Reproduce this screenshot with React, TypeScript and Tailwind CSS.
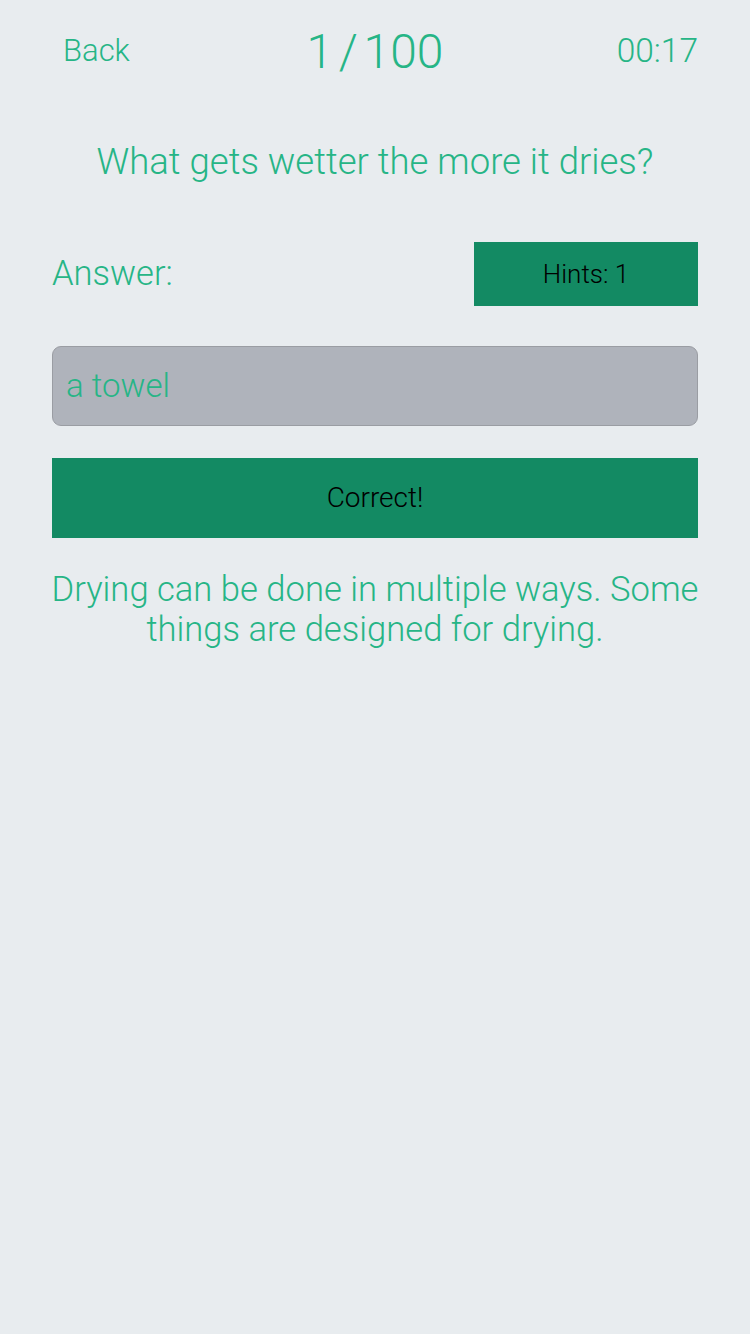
import React from "react";

export default function App() {
  return (
    <div
      className="w-[750px] h-[1334px] bg-[#e8ecef] flex flex-col"
      style={{ fontFamily: "Roboto, 'Liberation Sans', sans-serif" }}
    >
      <div className="flex items-center justify-between h-[100px] pt-[3px] px-[52px]">
        <div className="w-[150px] pl-[11px] text-[31px] font-light text-[#26b586]">Back</div>
        <div className="text-[48px] font-light text-[#26b586] [word-spacing:-6px]">1 / 100</div>
        <div className="w-[150px] text-right text-[33.5px] font-light text-[#26b586]">00:17</div>
      </div>
      <div className="mt-[40px] text-center text-[36.5px] font-light text-[#26b586] leading-[44px]">
        What gets wetter the more it dries?
      </div>
      <div className="mt-[58px] mx-[52px] flex items-center justify-between">
        <div className="text-[34.5px] font-light text-[#26b586]">Answer:</div>
        <div className="w-[224px] h-[64px] bg-[#138a63] flex items-center justify-center text-[26px] font-light text-black">
          Hints: 1
        </div>
      </div>
      <div className="mt-[40px] mx-[52px] h-[80px] rounded-[9px] bg-[#afb3bb] border border-[#9a9da3] flex items-center px-[13px] text-[33px] font-light text-[#26b586]">
        a towel
      </div>
      <div className="mt-[32px] mx-[52px] h-[80px] bg-[#138a63] flex items-center justify-center text-[28px] font-light text-black">
        Correct!
      </div>
      <div className="mt-[31px] mx-[50px] text-center text-[34.6px] font-light leading-[40px] text-[#26b586]">
        Drying can be done in multiple ways. Some things are designed for drying.
      </div>
    </div>
  );
}
